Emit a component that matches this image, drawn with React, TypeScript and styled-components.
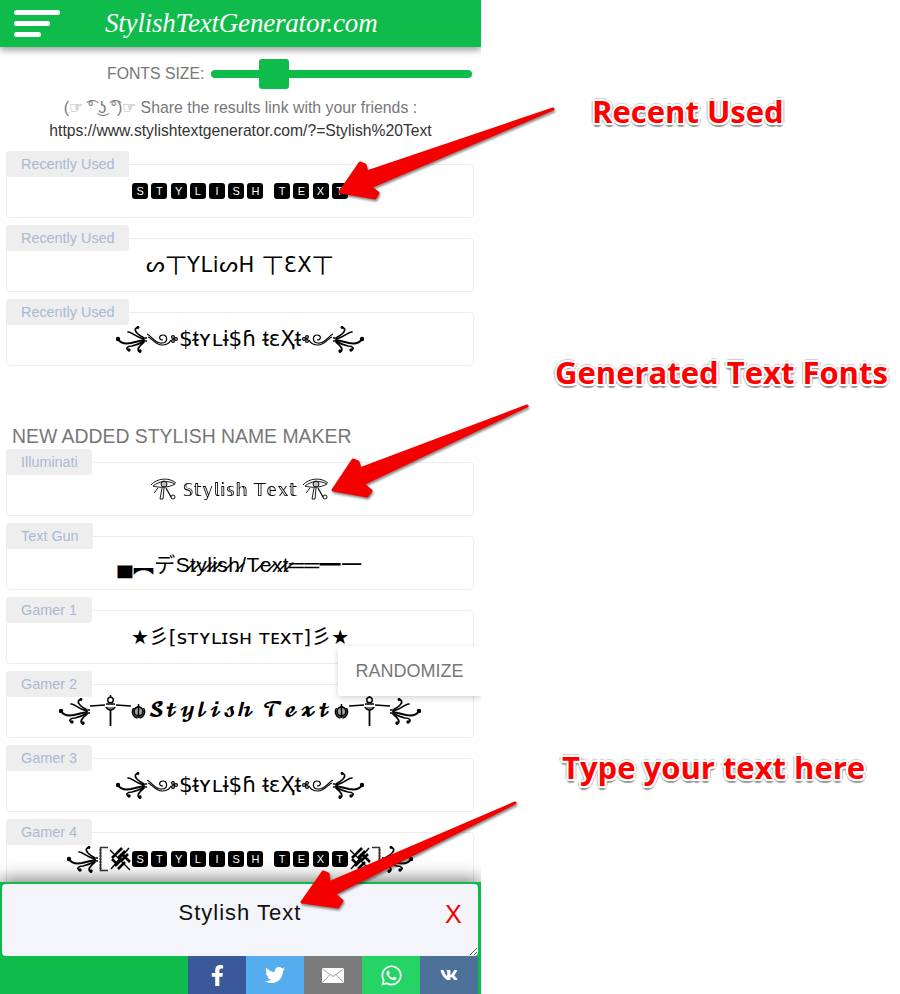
import styled, { createGlobalStyle } from "styled-components";
import { FaFacebookF, FaTwitter, FaWhatsapp, FaVk } from "react-icons/fa";

const GlobalStyle = createGlobalStyle`
    html, body {
        margin: 0;
        padding: 0;
        background: #fff;
        font-family: "Liberation Sans", Arial, sans-serif;
    }
`;

const GREEN = "#0ebb4b";

const Page = styled.div`
    position: relative;
    width: 900px;
    height: 994px;
    overflow: hidden;
    background: #fff;
`;

const Phone = styled.div`
    position: relative;
    width: 481px;
    height: 994px;
    overflow: hidden;
    display: flex;
    flex-direction: column;
`;

const Header = styled.header`
    flex: none;
    height: 47px;
    display: flex;
    align-items: center;
    background: ${GREEN};
    box-shadow: 0 3px 7px rgba(0, 0, 0, 0.4);
`;

const Burger = styled.div`
    width: 46px;
    margin-left: 14px;
    display: flex;
    flex-direction: column;
    gap: 6px;
`;

const BurgerBar = styled.span<{ $w: number }>`
    display: block;
    height: 5px;
    width: ${(p) => p.$w}px;
    border-radius: 3px;
    background: #fff;
`;

const Logo = styled.div`
    margin-left: 45px;
    color: #fff;
    font-family: "Liberation Serif", serif;
    font-style: italic;
    font-size: 27px;
    letter-spacing: -0.2px;
    white-space: nowrap;
`;

const SizeRow = styled.div`
    flex: none;
    height: 30px;
    margin-top: 12px;
    display: flex;
    align-items: center;
    padding-left: 107px;
    gap: 7px;
    color: #777;
    font-size: 15.8px;
`;

const Range = styled.input`
    appearance: none;
    -webkit-appearance: none;
    width: 261px;
    height: 8px;
    margin: 0;
    border-radius: 4px;
    background: ${GREEN};

    &::-webkit-slider-thumb {
        -webkit-appearance: none;
        width: 30px;
        height: 30px;
        border-radius: 3px;
        background: ${GREEN};
    }
`;

const Share = styled.div`
    flex: none;
    margin-top: 7px;
    text-align: center;
    color: #777;
    font-size: 15.85px;
    line-height: 23px;
`;

const ShareLink = styled.div`
    color: #333;
    font-size: 15.7px;
`;

const List = styled.div<{ $flush?: boolean }>`
    flex: none;
    margin-top: ${(p) => (p.$flush ? 0 : 9)}px;
    padding: 0 7px 0 6px;
    display: flex;
    flex-direction: column;
    gap: 7px;
`;

const Row = styled.div`
    display: flex;
    flex-direction: column;
    align-items: flex-start;
`;

const Tab = styled.div`
    position: relative;
    z-index: 1;
    min-width: 57px;
    height: 26px;
    padding: 0 14px 0 15px;
    line-height: 26px;
    border-radius: 3px;
    background: #eeeeee;
    color: #a9b9d3;
    font-size: 14.4px;
    white-space: nowrap;
`;

const Card = styled.div`
    align-self: stretch;
    box-sizing: border-box;
    height: 54px;
    margin-top: -13px;
    border: 1px solid #ededed;
    border-radius: 4px;
    background: #fff;
    display: flex;
    align-items: center;
    justify-content: center;
    color: #000;
    font-size: 20px;
    white-space: nowrap;
`;

const Heading = styled.h2`
    flex: none;
    margin: 58px 0 1px 12px;
    color: #777;
    font-size: 19.4px;
    font-weight: 400;
    line-height: 24px;
    white-space: nowrap;
`;

const Keys = styled.span`
    display: inline-flex;
    align-items: center;
    gap: 3.2px;
`;

const Key = styled.span`
    width: 16px;
    height: 16px;
    border-radius: 3px;
    background: #000;
    color: #fff;
    font-size: 11px;
    line-height: 16px;
    text-align: center;
`;

const KeyGap = styled.span`
    width: 4.4px;
`;

const Canadian = styled.span`
    margin-bottom: 5px;
    font-family: "DejaVu Sans", "Noto Sans CJK SC", sans-serif;
    font-size: 21px;
    letter-spacing: 0.6px;
`;

const Occult = styled.span`
    font-family: "DejaVu Sans", sans-serif;
    font-size: 21.5px;
    margin: 0 1px;
`;

const Struck = styled.span`
    padding-top: 1px;
    font-family: "DejaVu Sans", sans-serif;
    font-size: 17px;
    margin: 0 6px;
    letter-spacing: 0.4px;
    opacity: 0.999;
`;

const Gun = styled.span`
    font-family: "Liberation Sans", "Noto Sans CJK JP", sans-serif;
    font-size: 21px;
    letter-spacing: 0.4px;
    display: inline-flex;
    align-items: center;
`;

const GamerOne = styled.span`
    margin-bottom: 3px;
    font-family: "DejaVu Sans", "Noto Sans CJK JP", sans-serif;
    font-size: 20px;
`;

const Script = styled.span`
    font-family: "DejaVu Math TeX Gyre", "Liberation Serif", serif;
    font-weight: 400;
    font-size: 18px;
    letter-spacing: 1.1px;
    margin: 0 2px;
`;

const Inline = styled.span`
    display: inline-flex;
    align-items: center;
`;

const Flip = styled.svg<{ $flip?: boolean }>`
    flex: none;
    transform: ${(p) => (p.$flip ? "scaleX(-1)" : "none")};
`;

const Randomize = styled.button`
    position: absolute;
    left: 338px;
    top: 646px;
    width: 143px;
    height: 50px;
    border: 0;
    border-radius: 3px 0 0 3px;
    background: #fff;
    box-shadow: 0 2px 6px rgba(0, 0, 0, 0.18);
    color: #777;
    font-family: "Liberation Sans", Arial, sans-serif;
    font-size: 18px;
    z-index: 2;
`;

const Composer = styled.div`
    position: absolute;
    left: 0;
    right: 0;
    bottom: 0;
    height: 112px;
    box-sizing: border-box;
    padding: 2px 3px 0 2px;
    background: ${GREEN};
    box-shadow: 0 -3px 16px rgba(0, 0, 0, 0.5);
    display: flex;
    flex-direction: column;
    z-index: 3;
`;

const InputBox = styled.textarea`
    flex: none;
    display: block;
    width: 100%;
    height: 72px;
    box-sizing: border-box;
    margin: 0;
    padding: 16px 0 0;
    border: 0;
    border-radius: 4px;
    outline: 0;
    background: #f4f5fb;
    color: #111;
    font-family: "Liberation Sans", Arial, sans-serif;
    font-size: 22px;
    letter-spacing: 1px;
    line-height: 26px;
    text-align: center;
`;

const Clear = styled.span`
    position: absolute;
    left: 445px;
    top: 18px;
    color: #f00000;
    font-size: 25px;
    line-height: 29px;
`;

const ShareBar = styled.div`
    flex: 1;
    display: flex;
    justify-content: flex-end;
`;

const ShareButton = styled.a<{ $bg: string }>`
    width: 58px;
    display: flex;
    align-items: center;
    justify-content: center;
    background: ${(p) => p.$bg};
    color: #fff;
`;

const Overlay = styled.svg`
    position: absolute;
    left: 0;
    top: 0;
    z-index: 5;
    pointer-events: none;
`;

const ArrowShape = styled.polygon`
    fill: #f50000;
    stroke: #f50000;
    stroke-width: 3px;
    stroke-linejoin: round;
    filter: drop-shadow(1px 2px 1px rgba(0, 0, 0, 0.45));
`;

const Callout = styled.div<{ $x: number; $y: number }>`
    position: absolute;
    left: ${(p) => p.$x}px;
    top: ${(p) => p.$y}px;
    z-index: 6;
    color: #fe0000;
    font-family: "Open Sans", "Noto Sans", sans-serif;
    font-weight: 700;
    font-size: 31px;
    line-height: 40px;
    white-space: nowrap;
    text-shadow:
        2px 0 0 #fff, -2px 0 0 #fff, 0 2px 0 #fff, 0 -2px 0 #fff,
        1.5px 1.5px 0 #fff, -1.5px 1.5px 0 #fff, 1.5px -1.5px 0 #fff, -1.5px -1.5px 0 #fff,
        0 3.5px 1px #999, 1.5px 3px 1px #aaa, -1.5px 3px 1px #aaa,
        3px 0 1px #bbb, -3px 0 1px #bbb, 0 -3px 1px #ccc;
`;

// the curly flourish either end of the fancy names
function Swirl({ flip }: { flip?: boolean }) {
    return (
        <Flip $flip={flip} width="31" height="27" viewBox="0 0 31 27" fill="none" stroke="#000" strokeLinecap="round">
            <circle cx="2" cy="13" r="2.2" fill="#000" stroke="none" />
            <path d="M2 13C5 18 10 18 15 17C19 16 23 15 28 14" strokeWidth="2" />
            <path d="M22 1C17 3 19 7 28 12" strokeWidth="1.7" />
            <path d="M12 6C15 5 17 10 28 13" strokeWidth="1.5" />
            <path d="M13 24C9 23 11 20 16 20C21 19 25 17 28 15" strokeWidth="1.7" />
            <path d="M24 26C20 24 23 20 28 16" strokeWidth="1.7" />
            <circle cx="13" cy="24" r="1.7" fill="#000" stroke="none" />
            <circle cx="24" cy="25" r="1.7" fill="#000" stroke="none" />
            <circle cx="22" cy="1.5" r="1.4" fill="#000" stroke="none" />
            <circle cx="30" cy="12" r="1" fill="#000" stroke="none" />
            <circle cx="30" cy="15" r="1" fill="#000" stroke="none" />
        </Flip>
    );
}

function Curl({ flip }: { flip?: boolean }) {
    return (
        <Flip $flip={flip} width="31" height="16" viewBox="0 0 31 16" fill="none" stroke="#000" strokeWidth="1.2">
            <path d="M0 3C5 5 8 13 15 12C21 12 21 4 16 4C12 4 11 9 16 9" />
            <path d="M1 6C5 7 8 14 15 14C20 14 23 11 24 9" />
            <circle cx="26" cy="6" r="1.4" />
            <circle cx="26" cy="10" r="1.4" />
            <circle cx="29" cy="8" r="1.4" />
        </Flip>
    );
}

function Horus() {
    return (
        <Flip width="26" height="22" viewBox="0 0 26 22" fill="none" stroke="#000" strokeWidth="0.9">
            <path d="M0 7C6 0 18 -1 25 5" />
            <path d="M2 8C8 3 17 2 24 6C17 10 9 10 2 8Z" />
            <circle cx="13" cy="6" r="3" fill="#000" fillOpacity="0.25" />
            <path d="M11 10L9 21L12 21L13 10" />
            <path d="M15 10L20 19" strokeWidth="1.2" />
            <circle cx="22" cy="19" r="2" />
            <path d="M7 10L3 15" />
        </Flip>
    );
}

function Dagger() {
    return (
        <Flip width="41" height="32" viewBox="0 0 41 32" fill="none" stroke="#000">
            <path d="M0 11L15 10M26 10L41 11" strokeWidth="1.4" />
            <path d="M20.5 15V31" strokeWidth="1.8" />
            <circle cx="20.5" cy="5" r="2.8" strokeWidth="1.4" />
            <path d="M20.5 0V2M16 9H25M16 12C18 16 23 16 25 12" strokeWidth="1.5" />
            <path d="M17 13H24" strokeWidth="1" />
        </Flip>
    );
}

function Khanda({ flip }: { flip?: boolean }) {
    return (
        <Flip $flip={flip} width="15" height="16" viewBox="0 0 15 16" stroke="#000" fill="#000" fillOpacity="0.35">
            <circle cx="7.5" cy="8.5" r="4.5" strokeWidth="1.8" />
            <path d="M7.5 1V15M2.5 5C0 9 2 14 6.5 15M12.5 5C15 9 13 14 8.5 15" strokeWidth="1.4" fill="none" />
        </Flip>
    );
}

function RulerBracket({ flip }: { flip?: boolean }) {
    return (
        <Flip $flip={flip} width="10" height="26" viewBox="0 0 10 26" fill="none" stroke="#333">
            <path d="M10 1.5H2.5V24.5H10" strokeWidth="1.6" />
            <path d="M1 4H4M1 7H4M1 10H4M1 13H4M1 16H4M1 19H4M1 22H4" strokeWidth="0.8" />
        </Flip>
    );
}

function CrossMark() {
    return (
        <Flip width="24" height="25" viewBox="0 0 24 25" fill="none" stroke="#000">
            <path d="M2 3L22 23M21 1L3 22" strokeWidth="1.4" />
            <path d="M7 8L14 1M10 11L17 4M13 14L20 7M4 11L11 4M7 19L14 12M10 22L17 15M15 8L22 15M4 12L10 18" strokeWidth="2.6" />
        </Flip>
    );
}

function KeyWord({ word }: { word: string }) {
    return (
        <Keys>
            {word.split("").map((ch, i) =>
                ch === " " ? <KeyGap key={i} /> : <Key key={i}>{ch}</Key>,
            )}
        </Keys>
    );
}

function OccultLine() {
    return (
        <Inline>
            <Swirl />
            <Curl />
            <Occult>$ᵵʏʟɨ$ɦ ᵵɛҲᵵ</Occult>
            <Curl flip />
            <Swirl flip />
        </Inline>
    );
}

function MailIcon() {
    return (
        <svg width="22" height="15" viewBox="0 0 22 15">
            <rect width="22" height="15" rx="1.5" fill="#fff" />
            <path d="M1 1.5L11 8.5L21 1.5M1 14L8 6.5M21 14L14 6.5" stroke="#8a8a8a" strokeWidth="0.8" fill="none" />
        </svg>
    );
}

const arrows = [
    "553,109 367,172 365,165 360,163 340,192 375,198 378,193 370,187",
    "527,406 360,469 358,462 353,460 333,490 367,496 371,491 363,484",
    "515,803 329,883 328,874 323,872 302,902 338,907 342,901 334,894",
];

const shareButtons = [
    { bg: "#3b5998", icon: <FaFacebookF size={21} /> },
    { bg: "#55acee", icon: <FaTwitter size={20} /> },
    { bg: "#7b7b7b", icon: <MailIcon /> },
    { bg: "#25d366", icon: <FaWhatsapp size={23} /> },
    { bg: "#4d7198", icon: <FaVk size={18} /> },
];

function App() {
    return (
        <Page>
            <GlobalStyle />
            <Phone>
                <Header>
                    <Burger>
                        <BurgerBar $w={46} />
                        <BurgerBar $w={36} />
                        <BurgerBar $w={27} />
                    </Burger>
                    <Logo>StylishTextGenerator.com</Logo>
                </Header>

                <SizeRow>
                    FONTS SIZE:
                    <Range type="range" min={0} max={100} step={0.1} defaultValue={20.8} />
                </SizeRow>

                <Share>
                    (☞ ͡° ͜ʖ ͡°)☞ Share the results link with your friends :
                    <ShareLink>https://www.stylishtextgenerator.com/?=Stylish%20Text</ShareLink>
                </Share>

                <List>
                    <Row>
                        <Tab>Recently Used</Tab>
                        <Card>
                            <Inline>
                                <KeyWord word="STYLISH TEXT" />
                            </Inline>
                        </Card>
                    </Row>
                    <Row>
                        <Tab>Recently Used</Tab>
                        <Card>
                            <Canadian>ᔕ丅YLiᔕH 丅ƐX丅</Canadian>
                        </Card>
                    </Row>
                    <Row>
                        <Tab>Recently Used</Tab>
                        <Card>
                            <OccultLine />
                        </Card>
                    </Row>
                </List>

                <Heading>NEW ADDED STYLISH NAME MAKER</Heading>

                <List $flush>
                    <Row>
                        <Tab>Illuminati</Tab>
                        <Card>
                            <Inline>
                                <Horus />
                                <Struck>𝕊𝕥𝕪𝕝𝕚𝕤𝕙 𝕋𝕖𝕩𝕥</Struck>
                                <Horus />
                            </Inline>
                        </Card>
                    </Row>
                    <Row>
                        <Tab>Text Gun</Tab>
                        <Card>
                            <Gun>▄︻デS̷t̷y̷l̷i̷s̷h̷/T̷e̷x̷t̷══━一</Gun>
                        </Card>
                    </Row>
                    <Row>
                        <Tab>Gamer 1</Tab>
                        <Card>
                            <GamerOne>★彡[ꜱᴛʏʟɪꜱʜ ᴛᴇxᴛ]彡★</GamerOne>
                        </Card>
                    </Row>
                    <Row>
                        <Tab>Gamer 2</Tab>
                        <Card>
                            <Inline>
                                <Swirl />
                                <Dagger />
                                <Khanda />
                                <Script>𝓢𝓽𝔂𝓵𝓲𝓼𝓱 𝓣𝓮𝔁𝓽</Script>
                                <Khanda flip />
                                <Dagger />
                                <Swirl flip />
                            </Inline>
                        </Card>
                    </Row>
                    <Row>
                        <Tab>Gamer 3</Tab>
                        <Card>
                            <OccultLine />
                        </Card>
                    </Row>
                    <Row>
                        <Tab>Gamer 4</Tab>
                        <Card>
                            <Inline>
                                <Swirl />
                                <RulerBracket />
                                <CrossMark />
                                <KeyWord word="STYLISH TEXT" />
                                <CrossMark />
                                <RulerBracket flip />
                                <Swirl flip />
                            </Inline>
                        </Card>
                    </Row>
                </List>

                <Randomize>RANDOMIZE</Randomize>

                <Composer>
                    <InputBox readOnly value="Stylish Text" />
                    <Clear>X</Clear>
                    <ShareBar>
                        {shareButtons.map((b) => (
                            <ShareButton key={b.bg} $bg={b.bg}>
                                {b.icon}
                            </ShareButton>
                        ))}
                    </ShareBar>
                </Composer>
            </Phone>

            <Overlay width="900" height="994">
                {arrows.map((pts) => (
                    <ArrowShape key={pts} points={pts} />
                ))}
            </Overlay>

            <Callout $x={592} $y={91}>Recent Used</Callout>
            <Callout $x={555} $y={352}>Generated Text Fonts</Callout>
            <Callout $x={562} $y={747}>Type your text here</Callout>
        </Page>
    );
}

export default App;
